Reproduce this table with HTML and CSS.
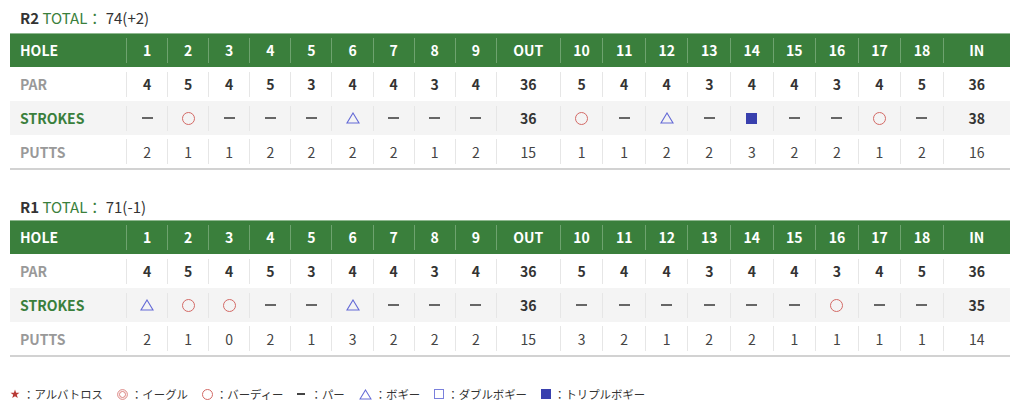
FILE: index.html
```html
<!DOCTYPE html>
<html lang="ja">
<head>
<meta charset="utf-8">
<link rel="stylesheet" href="styles.css">
</head>
<body>
<div class="page">
  <section class="round">
    <h2 class="round-title"><b>R2</b> <span class="total">TOTAL：</span> 74(+2)</h2>
    <div class="score">
      <div class="row r-head"><div class="cell lbl">HOLE</div><div class="cell">1</div><div class="cell">2</div><div class="cell">3</div><div class="cell">4</div><div class="cell">5</div><div class="cell">6</div><div class="cell">7</div><div class="cell">8</div><div class="cell">9</div><div class="cell">OUT</div><div class="cell">10</div><div class="cell">11</div><div class="cell">12</div><div class="cell">13</div><div class="cell">14</div><div class="cell">15</div><div class="cell">16</div><div class="cell">17</div><div class="cell">18</div><div class="cell">IN</div></div>
      <div class="row r-par"><div class="cell lbl">PAR</div><div class="cell">4</div><div class="cell">5</div><div class="cell">4</div><div class="cell">5</div><div class="cell">3</div><div class="cell">4</div><div class="cell">4</div><div class="cell">3</div><div class="cell">4</div><div class="cell">36</div><div class="cell">5</div><div class="cell">4</div><div class="cell">4</div><div class="cell">3</div><div class="cell">4</div><div class="cell">4</div><div class="cell">3</div><div class="cell">4</div><div class="cell">5</div><div class="cell">36</div></div>
      <div class="row r-str"><div class="cell lbl">STROKES</div>
        <div class="cell"><i class="s-dash"></i></div>
        <div class="cell"><i class="s-circle"></i></div>
        <div class="cell"><i class="s-dash"></i></div>
        <div class="cell"><i class="s-dash"></i></div>
        <div class="cell"><i class="s-dash"></i></div>
        <div class="cell"><svg class="s-tri" viewBox="0 0 14 12"><path d="M7 1 L13 11 L1 11 Z"/></svg></div>
        <div class="cell"><i class="s-dash"></i></div>
        <div class="cell"><i class="s-dash"></i></div>
        <div class="cell"><i class="s-dash"></i></div>
        <div class="cell sum">36</div>
        <div class="cell"><i class="s-circle"></i></div>
        <div class="cell"><i class="s-dash"></i></div>
        <div class="cell"><svg class="s-tri" viewBox="0 0 14 12"><path d="M7 1 L13 11 L1 11 Z"/></svg></div>
        <div class="cell"><i class="s-dash"></i></div>
        <div class="cell"><i class="s-square"></i></div>
        <div class="cell"><i class="s-dash"></i></div>
        <div class="cell"><i class="s-dash"></i></div>
        <div class="cell"><i class="s-circle"></i></div>
        <div class="cell"><i class="s-dash"></i></div>
        <div class="cell sum">38</div>
      </div>
      <div class="row r-putt"><div class="cell lbl">PUTTS</div><div class="cell">2</div><div class="cell">1</div><div class="cell">1</div><div class="cell">2</div><div class="cell">2</div><div class="cell">2</div><div class="cell">2</div><div class="cell">1</div><div class="cell">2</div><div class="cell">15</div><div class="cell">1</div><div class="cell">1</div><div class="cell">2</div><div class="cell">2</div><div class="cell">3</div><div class="cell">2</div><div class="cell">2</div><div class="cell">1</div><div class="cell">2</div><div class="cell">16</div></div>
    </div>
  </section>

  <section class="round">
    <h2 class="round-title"><b>R1</b> <span class="total">TOTAL：</span> 71(-1)</h2>
    <div class="score">
      <div class="row r-head"><div class="cell lbl">HOLE</div><div class="cell">1</div><div class="cell">2</div><div class="cell">3</div><div class="cell">4</div><div class="cell">5</div><div class="cell">6</div><div class="cell">7</div><div class="cell">8</div><div class="cell">9</div><div class="cell">OUT</div><div class="cell">10</div><div class="cell">11</div><div class="cell">12</div><div class="cell">13</div><div class="cell">14</div><div class="cell">15</div><div class="cell">16</div><div class="cell">17</div><div class="cell">18</div><div class="cell">IN</div></div>
      <div class="row r-par"><div class="cell lbl">PAR</div><div class="cell">4</div><div class="cell">5</div><div class="cell">4</div><div class="cell">5</div><div class="cell">3</div><div class="cell">4</div><div class="cell">4</div><div class="cell">3</div><div class="cell">4</div><div class="cell">36</div><div class="cell">5</div><div class="cell">4</div><div class="cell">4</div><div class="cell">3</div><div class="cell">4</div><div class="cell">4</div><div class="cell">3</div><div class="cell">4</div><div class="cell">5</div><div class="cell">36</div></div>
      <div class="row r-str"><div class="cell lbl">STROKES</div>
        <div class="cell"><svg class="s-tri" viewBox="0 0 14 12"><path d="M7 1 L13 11 L1 11 Z"/></svg></div>
        <div class="cell"><i class="s-circle"></i></div>
        <div class="cell"><i class="s-circle"></i></div>
        <div class="cell"><i class="s-dash"></i></div>
        <div class="cell"><i class="s-dash"></i></div>
        <div class="cell"><svg class="s-tri" viewBox="0 0 14 12"><path d="M7 1 L13 11 L1 11 Z"/></svg></div>
        <div class="cell"><i class="s-dash"></i></div>
        <div class="cell"><i class="s-dash"></i></div>
        <div class="cell"><i class="s-dash"></i></div>
        <div class="cell sum">36</div>
        <div class="cell"><i class="s-dash"></i></div>
        <div class="cell"><i class="s-dash"></i></div>
        <div class="cell"><i class="s-dash"></i></div>
        <div class="cell"><i class="s-dash"></i></div>
        <div class="cell"><i class="s-dash"></i></div>
        <div class="cell"><i class="s-dash"></i></div>
        <div class="cell"><i class="s-circle"></i></div>
        <div class="cell"><i class="s-dash"></i></div>
        <div class="cell"><i class="s-dash"></i></div>
        <div class="cell sum">35</div>
      </div>
      <div class="row r-putt"><div class="cell lbl">PUTTS</div><div class="cell">2</div><div class="cell">1</div><div class="cell">0</div><div class="cell">2</div><div class="cell">1</div><div class="cell">3</div><div class="cell">2</div><div class="cell">2</div><div class="cell">2</div><div class="cell">15</div><div class="cell">3</div><div class="cell">2</div><div class="cell">1</div><div class="cell">2</div><div class="cell">2</div><div class="cell">1</div><div class="cell">1</div><div class="cell">1</div><div class="cell">1</div><div class="cell">14</div></div>
    </div>
  </section>

  <ul class="legend">
    <li><svg class="l-star" viewBox="0 0 20 20"><path d="M10 1 L12.2 7.4 L19 7.5 L13.6 11.6 L15.6 18.2 L10 14.3 L4.4 18.2 L6.4 11.6 L1 7.5 L7.8 7.4 Z"/></svg>：アルバトロス</li>
    <li><svg class="l-dcircle" viewBox="0 0 12 12"><circle cx="6" cy="6" r="5.3"/><circle cx="6" cy="6" r="3.3"/></svg>：イーグル</li>
    <li><i class="l-circle"></i>：バーディー</li>
    <li><i class="l-dash"></i>：パー</li>
    <li><svg class="l-tri" viewBox="0 0 14 12"><path d="M7 1 L13 11 L1 11 Z"/></svg>：ボギー</li>
    <li><i class="l-osq"></i>：ダブルボギー</li>
    <li><i class="l-sq"></i>：トリプルボギー</li>
  </ul>
</div>
</body>
</html>
```

FILE: styles.css
```css
* { box-sizing: border-box; }
body {
  margin: 0;
  background: #fff;
  font-family: "Noto Sans CJK JP", "Noto Sans", sans-serif;
  color: #333;
}
.page {
  padding: 8px 14px 0 10px;
}
.round + .round { margin-top: 27px; }
.round-title {
  margin: 0 0 5px 10px;
  font-size: 15px;
  line-height: 20px;
  font-weight: 400;
  color: #333;
}
.round + .round .round-title { margin-bottom: 3px; }
.round-title b { font-weight: 700; }
.round-title .total { color: #3a7f3c; }

.score {
  width: 1000px;
  border-bottom: 2px solid #d2d2d2;
}
.row {
  display: grid;
  grid-template-columns: 116px repeat(9, 41.1px) 64px repeat(9, 42.55px) 67px;
  align-items: center;
  height: 34px;
  font-size: 14px;
}
.row.r-putt { height: 33px; }
.cell {
  height: 25px;
  border-left: 1px solid #e6e6e6;
  display: flex;
  align-items: center;
  justify-content: center;
}
.cell.lbl {
  border-left: none;
  justify-content: flex-start;
  padding-left: 10px;
}
.r-head {
  background: #3a7f3c;
  box-shadow: inset 0 1px 0 #8fb890;
}
.r-head .cell {
  color: #fff;
  font-weight: 700;
  border-left-color: #6ea36f;
}
.r-par .cell { font-weight: 700; color: #333; }
.r-str { background: #f4f4f4; }
.r-str .sum { font-weight: 700; color: #333; }
.r-putt .cell { color: #444; font-weight: 400; }
.r-par .cell.lbl, .r-putt .cell.lbl { color: #999; font-weight: 700; }
.r-str .cell.lbl { color: #3a7f3c; font-weight: 700; }

.s-dash {
  display: block;
  width: 11px;
  height: 2px;
  background: #666;
}
.s-circle {
  display: block;
  width: 13px;
  height: 13px;
  border: 1px solid #d36a66;
  border-radius: 50%;
}
.s-tri {
  display: block;
  width: 14px;
  height: 12px;
  fill: none;
  stroke: #646ad6;
  stroke-width: 1.1;
}
.s-square {
  display: block;
  width: 11px;
  height: 11px;
  background: #3940ae;
}

.legend {
  list-style: none;
  margin: 29px 0 0;
  padding: 0;
  display: flex;
  gap: 14px;
  font-size: 11.4px;
  line-height: 16px;
  color: #333;
}
.legend li {
  display: flex;
  align-items: center;
  gap: 3px;
}
.l-star {
  display: block;
  width: 10px;
  height: 10px;
  fill: #b83a36;
}
.l-dcircle {
  display: block;
  width: 11px;
  height: 11px;
  fill: none;
  stroke: #d36a66;
  stroke-width: 0.9;
}
.l-circle {
  display: block;
  width: 11px;
  height: 11px;
  border: 1px solid #d36a66;
  border-radius: 50%;
}
.l-dash {
  display: block;
  width: 8px;
  height: 1.5px;
  background: #444;
  margin: 0 2px 0 0;
}
.l-tri {
  display: block;
  width: 13px;
  height: 11px;
  fill: none;
  stroke: #646ad6;
  stroke-width: 1.1;
}
.l-osq {
  display: block;
  width: 10px;
  height: 10px;
  border: 1px solid #7a80dc;
}
.l-sq {
  display: block;
  width: 10px;
  height: 10px;
  background: #3940ae;
}
```
